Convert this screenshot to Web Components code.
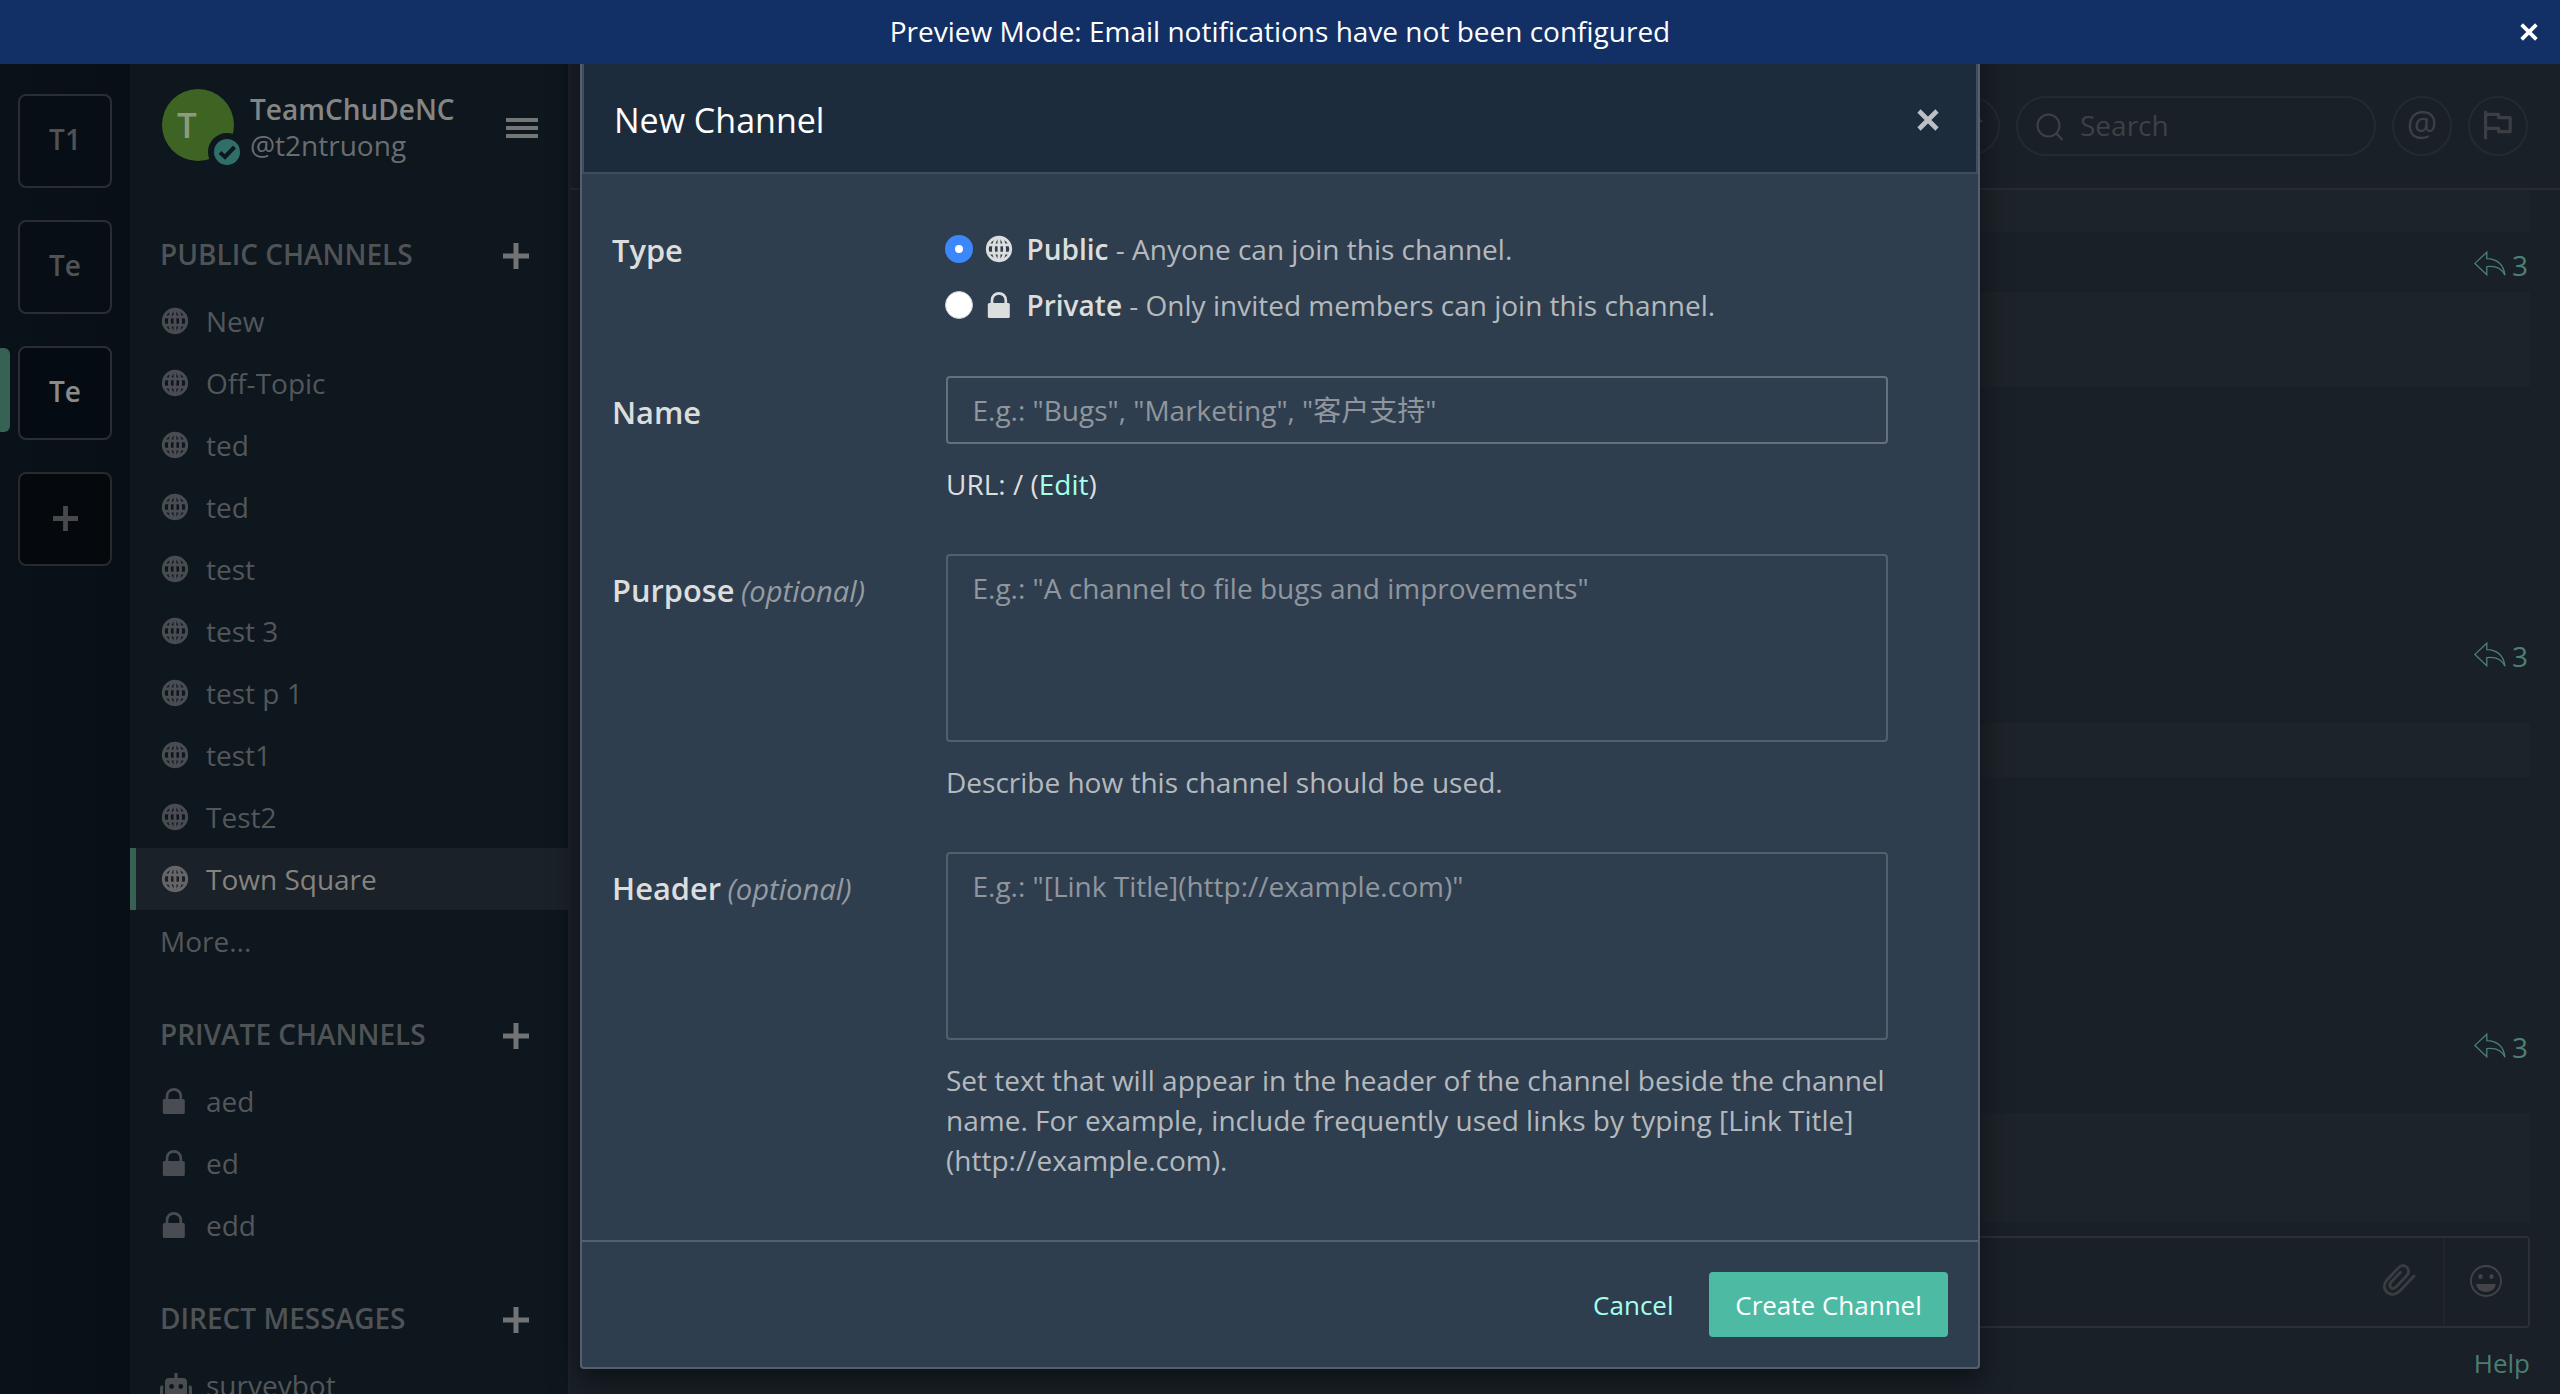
<!DOCTYPE html>
<html lang="en">
<head>
<meta charset="utf-8">
<title>New Channel</title>
<style>
html,body{margin:0;padding:0}
body{width:2560px;height:1394px;overflow:hidden;background:#192027;font-family:"Open Sans","Noto Sans","Noto Sans CJK SC",sans-serif;font-size:28px}
</style>
</head>
<body>
<chat-app></chat-app>
<script>
const ICONS = {
  globe: ['0 0 26 26', '<g fill="none" stroke="currentColor" stroke-width="2.9"><circle cx="13" cy="13" r="11.7"/><ellipse cx="13" cy="13" rx="5.6" ry="11.6"/><path d="M13 1.5v23M2.5 8.9h21M2.5 17.1h21"/></g>'],
  lock: ['0 0 26 26', '<path d="M6 12V8.2a6.9 6.9 0 0 1 13.8 0V12" fill="none" stroke="currentColor" stroke-width="2.7"/><rect x="1.800" y="11" width="22" height="15" rx="1.5" fill="currentColor"/>'],
  plus: ['0 0 26 26', '<path d="M13 0v26M0 13h26" stroke="currentColor" stroke-width="5" fill="none"/>'],
  cross: ['0 0 22 22', '<path d="M2 2l18 18M20 2L2 20" stroke="currentColor" stroke-width="4.6" fill="none"/>'],
  menu: ['0 0 32 20', '<path d="M0 2h32M0 10h32M0 18h32" stroke="currentColor" stroke-width="4"/>'],
  robot: ['0 0 32 30', '<path fill="currentColor" fill-rule="evenodd" d="M14.4 0h3.2v5H23a4 4 0 0 1 4 4v21H5V9a4 4 0 0 1 4-4h5.400zM9.200 13.500a2.400 2.400 0 1 0 4.800 0a2.400 2.400 0 1 0-4.800 0zM18.400 13.500a2.400 2.400 0 1 0 4.800 0a2.400 2.400 0 1 0-4.800 0zM10 21.500h1.600v4H10zM13.500 21.500h1.600v4h-1.600zM17 21.500h1.600v4H17zM20.500 21.500h1.600v4h-1.600zM0 14.500q0-2 2-2h1.200v14H2q-2 0-2-2zM32 14.500q0-2-2-2h-1.200v14H30q2 0 2-2z"/>'],
  search: ['0 0 28 28', '<circle cx="12.500" cy="12.500" r="11" fill="none" stroke="currentColor" stroke-width="2"/><path d="M20 20l6.500 7" stroke="currentColor" stroke-width="2.400"/>'],
  flag: ['0 0 28 28', '<path d="M1.600 1v26" stroke="currentColor" stroke-width="3.200" stroke-linecap="round"/><path d="M2 3.400h12.600v3.200h11.600v14H14.600v-3.200H2" fill="none" stroke="currentColor" stroke-width="3.200" stroke-linejoin="round"/>'],
  pin: ['0 0 28 28', '<path d="M17 1l10.500 10-4 .3-6 6-.5 5-4.500-4.500L4 26l7-9-4.500-4.500 5-.5 6-6z" fill="currentColor"/>'],
  reply: ['0 0 32 25', '<path d="M12.800 1.200L.9 12.400l11.900 11.400v-8.200c8.500-1 14.500.8 18.200 8.600C29.500 13.500 23.500 8 12.800 7.700z" fill="none" stroke="currentColor" stroke-width="1.300"/>'],
  clip: ['0 0 34 32', '<path d="M32 12L18.500 26.300c-3.600 3.700-8.800 5.300-12.800 2.500-4.500-3.200-4.200-9-.8-12.700L15.500 4.700c2.600-2.800 6-4 8.900-1.900 3.100 2.300 2.700 6.300.3 8.900L14.500 22.600c-1.600 1.700-3.800 2.400-5.400 1.200-1.800-1.400-1.600-3.900-.1-5.500L18.500 8.200" fill="none" stroke="currentColor" stroke-width="2.900" stroke-linecap="round"/>'],
  smile: ['0 0 32 32', '<circle cx="16" cy="16" r="15" fill="none" stroke="currentColor" stroke-width="1.800"/><ellipse cx="10.500" cy="11.600" rx="2.200" ry="2.500" fill="currentColor"/><ellipse cx="21.500" cy="11.600" rx="2.200" ry="2.500" fill="currentColor"/><path d="M6.200 19h19.600a9.800 8 0 0 1-19.600 0z" fill="currentColor"/>'],
  check: ['0 0 26 26', '<circle cx="13" cy="13" r="13" fill="#2f6f68"/><path d="M6 13.500l5 4.500L20.500 8" fill="none" stroke="#0e161e" stroke-width="4"/>']
};

function define(name, html, setup) {
  const tpl = document.createElement('template');
  tpl.innerHTML = html;
  customElements.define(name, class extends HTMLElement {
    connectedCallback() {
      if (this.shadowRoot) return;
      this.attachShadow({ mode: 'open' }).append(tpl.content.cloneNode(true));
      if (setup) setup(this, this.shadowRoot);
    }
  });
}

define('ui-icon', `<style>:host{display:block;flex:none}svg{display:block;width:100%;height:100%;overflow:visible}</style><svg></svg>`, (el, root) => {
  const [box, body] = ICONS[el.getAttribute('name')];
  const svg = root.querySelector('svg');
  svg.setAttribute('viewBox', box);
  svg.innerHTML = body;
});

define('announcement-bar', `<style>
:host{display:grid;grid-template-columns:1fr auto 1fr;height:64px;background:#123065;color:#fff;line-height:62px;position:relative;z-index:3}
p{margin:0;grid-column:2}
ui-icon{width:18px;height:18px;justify-self:end;margin:23px 22px 0 0}
</style><p><slot></slot></p><ui-icon name="cross"></ui-icon>`);

define('team-tile', `<style>
:host{display:flex;align-items:center;height:94px;position:relative;color:#505254;font-weight:600}
.box{box-sizing:border-box;width:94px;height:94px;margin-left:18px;padding-bottom:5px;border:2px solid #2b2d34;border-radius:8px;background:#070e15;display:flex;align-items:center;justify-content:center;line-height:38px}
:host([active]){color:#8c8b89}
:host([active]) .box{background:#050b12}
:host([add]) .box{background:#05080c;border-color:#292a2c;padding-bottom:1px}
.pill{display:none;position:absolute;left:-4px;top:2px;width:14px;height:84px;border-radius:6px;background:#366153}
:host([active]) .pill{display:block}
</style><span class="pill"></span><div class="box"><slot></slot></div>`);

define('team-sidebar', `<style>
:host{display:flex;flex-direction:column;gap:32px;box-sizing:border-box;width:130px;padding-top:30px;background:linear-gradient(90deg,#0a1219,#080f16)}
ui-icon{width:25px;height:25px;margin-left:1px;color:#48494b}
</style>
<team-tile>T1</team-tile><team-tile>Te</team-tile><team-tile active>Te</team-tile><team-tile add><ui-icon name="plus"></ui-icon></team-tile>`);

define('profile-header', `<style>
:host{display:flex;height:128px;box-sizing:border-box;padding:25px 30px 0 32px;color:#858583}
.avatar{position:relative;width:72px;height:72px;border-radius:50%;background:#3e6424;flex:none;display:flex;justify-content:center;color:#8c9a80;font:600 35px/71px "Open Sans",sans-serif;text-indent:-21px}
.ring{position:absolute;left:46px;top:44px;width:26px;height:26px;border:6px solid #0e161e;border-radius:50%;background:#0e161e}
.ring ui-icon{width:26px;height:26px}
.names{margin:2px 0 0 16px;flex:1;line-height:36px}
.team{font-weight:600;color:#858583}
.user{color:#6a6c6e}
.menu{width:32px;height:20px;margin-top:29px;color:#757777}
</style>
<div class="avatar">T<span class="ring"><ui-icon name="check"></ui-icon></span></div>
<div class="names"><div class="team">TeamChuDeNC</div><div class="user">@t2ntruong</div></div>
<ui-icon class="menu" name="menu"></ui-icon>`);

define('channel-section', `<style>
:host{display:block}
header{display:flex;align-items:flex-start;justify-content:space-between;height:98px;box-sizing:border-box;padding:44px 39px 0 30px;font-weight:600;line-height:36px;color:#4f5356}
ui-icon{width:26px;height:26px;margin-top:7px;color:#717374}
</style><header><span class="t"></span><ui-icon name="plus"></ui-icon></header><slot></slot>`, (el, root) => {
  root.querySelector('.t').textContent = el.getAttribute('heading');
});

define('channel-row', `<style>
:host{display:flex;align-items:center;box-sizing:border-box;height:62px;padding-left:26px;border-left:6px solid transparent;line-height:62px;color:#53575a}
.i{width:26px;height:26px;color:#494d51;margin-top:0}
.i.robot{width:32px;height:30px;margin:5px 0 0 -2px}
.i.lock{margin-left:-1px}
.s{width:44px;display:flex}
:host([active]){background:#1a2128;border-left-color:#366153;color:#84837f}
:host([active]) .i{color:#66666a}
</style><span class="s"></span><slot></slot>`, (el, root) => {
  const kind = el.getAttribute('icon'), s = root.querySelector('.s');
  if (!kind) { s.remove(); return; }
  const i = document.createElement('ui-icon');
  i.setAttribute('name', kind);
  i.className = 'i ' + kind;
  s.append(i);
});

define('channel-sidebar', `<style>
:host{display:block;box-sizing:border-box;width:440px;background:#0e161e;border-right:2px solid #1c2229;overflow:hidden}
channel-row.more{padding-left:24px}
</style>
<profile-header></profile-header>
<channel-section heading="PUBLIC CHANNELS">
<channel-row icon="globe">New</channel-row><channel-row icon="globe">Off-Topic</channel-row><channel-row icon="globe">ted</channel-row><channel-row icon="globe">ted</channel-row><channel-row icon="globe">test</channel-row><channel-row icon="globe">test 3</channel-row><channel-row icon="globe">test p 1</channel-row><channel-row icon="globe">test1</channel-row><channel-row icon="globe">Test2</channel-row><channel-row icon="globe" active>Town Square</channel-row><channel-row class="more">More...</channel-row>
</channel-section>
<channel-section heading="PRIVATE CHANNELS"><channel-row icon="lock">aed</channel-row><channel-row icon="lock">ed</channel-row><channel-row icon="lock">edd</channel-row></channel-section>
<channel-section heading="DIRECT MESSAGES"><channel-row icon="robot">surveybot</channel-row></channel-section>`);

define('channel-header', `<style>
:host{display:flex;justify-content:flex-end;gap:16px;box-sizing:border-box;height:126px;padding:32px 32px 0 0;border-bottom:2px solid #272b33;color:#3d4046}
.round,.search{box-sizing:border-box;height:60px;border:2px solid #242a31;border-radius:30px;display:flex}
.round{width:60px;align-items:center;justify-content:center;font-size:34px;line-height:52px}
.round ui-icon{width:28px;height:28px;margin-top:-2px;color:#3b3e43}
.round span{margin-top:-7px}
.search{width:360px;padding-left:18px;line-height:55px}
.search ui-icon{width:28px;height:28px;margin:15px 16px 0 0}
</style>
<div class="round"><ui-icon name="pin"></ui-icon></div>
<div class="search"><ui-icon name="search"></ui-icon>Search</div>
<div class="round"><span>@</span></div>
<div class="round"><ui-icon name="flag"></ui-icon></div>`);

define('post-replies', `<style>
:host{display:flex;justify-content:flex-end;box-sizing:border-box;height:60px;padding:10px 2px 0 0;line-height:46px;color:#4c8075}
ui-icon{width:32px;height:25px;margin:9px 6px 0 0}
</style><ui-icon name="reply"></ui-icon><slot></slot>`);

define('post-attachment', `<style>:host{display:block;background:#1d232a}</style>`);

define('post-list', `<style>
:host{display:flex;flex-direction:column;height:1032px;padding:0 30px}
.a{height:42px}.b{height:95px}.c{height:54px;margin-top:40px}.d{height:109px;margin-top:39px}
.r2{margin-top:236px}.r3{margin-top:237px}
</style>
<post-attachment class="a"></post-attachment><post-replies>3</post-replies><post-attachment class="b"></post-attachment>
<post-replies class="r2">3</post-replies><post-attachment class="c"></post-attachment>
<post-replies class="r3">3</post-replies><post-attachment class="d"></post-attachment>`);

define('message-box', `<style>
:host{display:flex;flex-direction:column;padding:14px 30px 0}
.box{box-sizing:border-box;height:92px;border:2px solid #2b3034;border-radius:4px;display:flex;justify-content:flex-end;align-items:center;color:#393d40}
.clip{width:34px;height:32px;margin:0 27px 5px 0}
.emoji{width:83px;height:88px;border-left:2px solid #1f252b;display:flex;align-items:center;justify-content:center;color:#424449}
.emoji ui-icon{width:32px;height:32px;margin:0 1px 2px 0}
.help{align-self:flex-end;font-size:26px;line-height:40px;margin-top:15px;color:#4c7c73}
</style>
<div class="box"><ui-icon class="clip" name="clip"></ui-icon><div class="emoji"><ui-icon name="smile"></ui-icon></div></div>
<div class="help">Help</div>`);

define('radio-option', `<style>
:host{display:flex;align-items:center;height:56px;line-height:56px;margin-left:-1px;color:#b4b9be}
.dot{box-sizing:border-box;width:28px;height:28px;border-radius:50%;background:#fff;border:1px solid #c9ccd0;margin-right:13px}
:host([checked]) .dot{border:10px solid #3b87fb}
ui-icon{width:26px;height:26px;margin-right:14.5px;color:#dcdddd}
b{font-weight:600;color:#dcdddd}
</style><span class="dot"></span><div><b></b> - <slot></slot></div>`, (el, root) => {
  const i = document.createElement('ui-icon');
  i.setAttribute('name', el.getAttribute('icon'));
  root.querySelector('.dot').after(i);
  root.querySelector('b').textContent = el.getAttribute('label');
});

define('form-row', `<style>
:host{display:grid;grid-template-columns:334px 942px;align-items:start;margin-bottom:50px}
.l{margin-top:16px;font-size:30.8px;line-height:40px;font-weight:600;color:#dcdddd;white-space:nowrap}
.l i{font-weight:400;font-size:29.2px;margin-left:-1.5px;color:#959ba2}
:host([radios]) .l{margin-top:9px}
</style><div class="l"></div><div><slot></slot></div>`, (el, root) => {
  const l = root.querySelector('.l');
  l.textContent = el.getAttribute('label');
  if (el.hasAttribute('optional')) {
    const i = document.createElement('i');
    i.textContent = '(optional)';
    l.append(' ', i);
  }
});

define('text-field', `<style>
:host{display:block;box-sizing:border-box;height:68px;border:2px solid #66707c;border-radius:4px;padding:12px 24.5px;line-height:40px;color:#8f969e}
:host([multiline]){height:188px;border-color:#535f6c}
</style><slot></slot>`);

define('help-text', `<style>
:host{display:block;margin-top:20px;line-height:40px;color:#b4b9be}
:host([bright]){color:#dcdddd}
::slotted(a){color:#a4ffeb}
</style><slot></slot>`);

define('channel-modal', `<style>
:host{position:absolute;z-index:2;left:580px;top:0;box-sizing:border-box;width:1400px;height:1369px;padding-top:64px;border:2px solid #535f6d;border-top:0;border-radius:4px;background:#2f3e4e;box-shadow:0 10px 30px rgba(0,0,0,.5);display:flex;flex-direction:column}
header{display:flex;align-items:flex-start;justify-content:space-between;box-sizing:border-box;height:110px;padding:33px 37px 0 30px;border:2px solid #404d5c;border-top:0;background:#1d2c3d;color:#fff;font-size:34px;line-height:46px}
header ui-icon{width:22px;height:22px;margin-top:12px;color:#bbc0c5}
main{padding:47px 30px 0;height:1066px;box-sizing:border-box}
.type{margin-bottom:43px}
footer{display:flex;justify-content:flex-end;align-items:flex-start;flex:1;padding:30px 30px 0;border-top:2px solid #535f6d;font-size:26px;line-height:67px;color:#a4ffeb}
.create{box-sizing:border-box;width:239px;height:65px;margin-left:35.5px;text-align:center;background:#4dbba4;color:#fff;border-radius:4px}
</style>
<header><span>New Channel</span><ui-icon name="cross"></ui-icon></header>
<main>
<form-row class="type" radios label="Type"><radio-option checked icon="globe" label="Public">Anyone can join this channel.</radio-option><radio-option icon="lock" label="Private">Only invited members can join this channel.</radio-option></form-row>
<form-row label="Name"><text-field>E.g.: "Bugs", "Marketing", "客户支持"</text-field><help-text bright>URL: / (<a>Edit</a>)</help-text></form-row>
<form-row label="Purpose" optional><text-field multiline>E.g.: "A channel to file bugs and improvements"</text-field><help-text>Describe how this channel should be used.</help-text></form-row>
<form-row label="Header" optional><text-field multiline>E.g.: "[Link Title](http://example.com)"</text-field><help-text>Set text that will appear in the header of the channel beside the channel name. For example, include frequently used links by typing [Link Title](http://example.com).</help-text></form-row>
</main>
<footer><span>Cancel</span><div class="create">Create Channel</div></footer>`);

define('chat-app', `<style>
:host{display:flex;flex-direction:column;position:relative;width:2560px;height:1394px;overflow:hidden}
.app{display:flex;flex:1;min-height:0}
.center{flex:1;min-width:0;background:#192027}
</style>
<announcement-bar>Preview Mode: Email notifications have not been configured</announcement-bar>
<div class="app"><team-sidebar></team-sidebar><channel-sidebar></channel-sidebar><div class="center"><channel-header></channel-header><post-list></post-list><message-box></message-box></div></div>
<channel-modal></channel-modal>`);
</script>
</body>
</html>
